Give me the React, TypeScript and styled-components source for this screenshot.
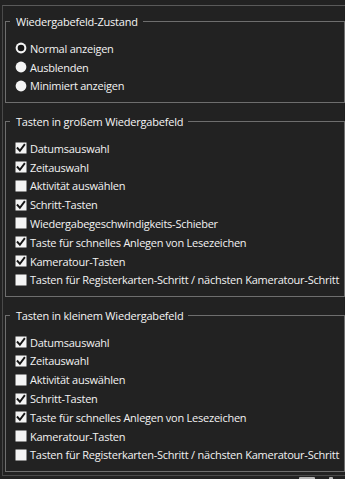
import React from "react";
import styled, { createGlobalStyle } from "styled-components";

const Global = createGlobalStyle`
  html, body { margin: 0; padding: 0; background: #222222; }
  body {
    font-family: "Open Sans", "Noto Sans", sans-serif;
    color: #f2f2f2;
    width: 345px;
    height: 479px;
    overflow: hidden;
  }
`;

const Panel = styled.div`
  margin: 5px 0 0 2px;
  border-top: 1px solid #5a5a5a;
  border-left: 1px solid #4a4a4a;
  border-bottom: 1px solid #4a4a4a;
  padding: 8px 0 3px 2px;
  display: flex;
  flex-direction: column;
  gap: 11px;
`;

const Group = styled.fieldset`
  margin: 0;
  border: 1px solid #6e6e6e;
  padding: 10px 0 6.5px 9px;
  min-width: 0;
`;

const Legend = styled.legend`
  margin-left: -5px;
  padding: 0 5px 0 6px;
  font-size: 11px;
  line-height: 15px;
  letter-spacing: -0.2px;
  color: #f5f5f5;
  white-space: nowrap;
`;

const List = styled.div`
  display: flex;
  flex-direction: column;
`;

const Row = styled.div`
  display: flex;
  align-items: center;
  height: 18.8px;
  gap: 3px;
  font-size: 11px;
  letter-spacing: -0.24px;
  white-space: nowrap;
  color: #f2f2f2;
`;

const Mark = styled.svg`
  flex: none;
  width: 12px;
  height: 12px;
  display: block;
`;

const Footer = styled.div`
  display: flex;
  justify-content: flex-end;
  gap: 14px;
  padding-right: 12px;
  margin-top: 1px;
`;

const FooterBtn = styled.div<{ $w: number }>`
  width: ${(p) => p.$w}px;
  height: 6px;
  background: #b8b8b8;
  border-radius: 1px 1px 0 0;
`;

const Check: React.FC<{ on: boolean }> = ({ on }) => (
  <Mark viewBox="0 0 12 12">
    <rect x="0.5" y="0.5" width="11" height="11" fill="#f4f4f4" />
    {on && (
      <path
        d="M2.6 6.2 L4.9 8.7 L9.3 2.9"
        fill="none"
        stroke="#151515"
        strokeWidth="1.9"
        strokeLinecap="square"
      />
    )}
  </Mark>
);

const Radio: React.FC<{ on: boolean }> = ({ on }) => (
  <Mark viewBox="0 0 12 12">
    <circle cx="6" cy="6" r="5.4" fill="#f4f4f4" />
    {on && <circle cx="6" cy="6" r="3.3" fill="#151515" />}
  </Mark>
);

const states: [string, boolean][] = [
  ["Normal anzeigen", true],
  ["Ausblenden", false],
  ["Minimiert anzeigen", false],
];

const large: [string, boolean][] = [
  ["Datumsauswahl", true],
  ["Zeitauswahl", true],
  ["Aktivität auswählen", false],
  ["Schritt-Tasten", true],
  ["Wiedergabegeschwindigkeits-Schieber", false],
  ["Taste für schnelles Anlegen von Lesezeichen", true],
  ["Kameratour-Tasten", true],
  ["Tasten für Registerkarten-Schritt / nächsten Kameratour-Schritt", false],
];

const small: [string, boolean][] = [
  ["Datumsauswahl", true],
  ["Zeitauswahl", true],
  ["Aktivität auswählen", false],
  ["Schritt-Tasten", true],
  ["Taste für schnelles Anlegen von Lesezeichen", true],
  ["Kameratour-Tasten", false],
  ["Tasten für Registerkarten-Schritt / nächsten Kameratour-Schritt", false],
];

export default function App() {
  return (
    <>
      <Global />
      <Panel>
        <Group>
          <Legend>Wiedergabefeld-Zustand</Legend>
          <List>
            {states.map(([t, on]) => (
              <Row key={t}>
                <Radio on={on} />
                {t}
              </Row>
            ))}
          </List>
        </Group>
        <Group>
          <Legend>Tasten in großem Wiedergabefeld</Legend>
          <List>
            {large.map(([t, on]) => (
              <Row key={t}>
                <Check on={on} />
                {t}
              </Row>
            ))}
          </List>
        </Group>
        <Group>
          <Legend>Tasten in kleinem Wiedergabefeld</Legend>
          <List>
            {small.map(([t, on]) => (
              <Row key={t}>
                <Check on={on} />
                {t}
              </Row>
            ))}
          </List>
        </Group>
      </Panel>
      <Footer>
        <FooterBtn $w={16} />
        <FooterBtn $w={4} />
      </Footer>
    </>
  );
}
